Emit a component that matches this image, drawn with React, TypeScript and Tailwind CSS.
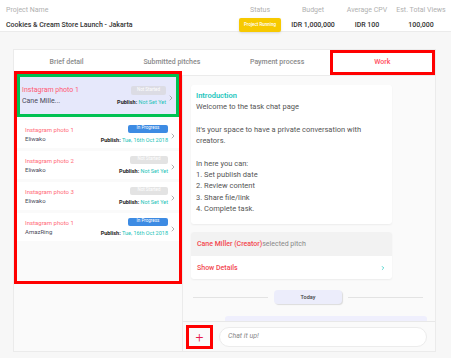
import { ChevronRight } from 'lucide-react';

const items = [
  { title: 'Instagram photo 1', who: 'Eliwako', status: 'progress', date: 'Tue, 16th Oct 2018' },
  { title: 'Instagram photo 2', who: 'Eliwako', status: 'none', date: 'Not Set Yet' },
  { title: 'Instagram photo 3', who: 'Eliwako', status: 'none', date: 'Not Set Yet' },
  { title: 'Instagram photo 1', who: 'AmazRing', status: 'progress', date: 'Tue, 16th Oct 2018' },
];

function Badge({ status }: { status: string }) {
  if (status === 'progress') {
    return (
      <span className="flex h-[8px] w-[40px] items-center justify-center rounded-[2px] bg-[#3d8be3] text-[4.5px] text-white">
        In Progress
      </span>
    );
  }
  return (
    <span className="flex h-[8px] w-[38px] items-center justify-center rounded-[2px] bg-[#e3e3e3] text-[4.5px] text-white">
      Not Started
    </span>
  );
}

function HeaderCol({ label, children, w }: { label: string; children: React.ReactNode; w: string }) {
  return (
    <div className={`flex flex-col items-center ${w}`}>
      <span className="text-[7px] leading-[10px] text-[#b0b0b0]">{label}</span>
      <div className="mt-[3px] flex h-[14px] items-center text-[7px] font-medium text-[#333]">{children}</div>
    </div>
  );
}

export default function App() {
  return (
    <div
      className="flex h-[358px] w-[451px] flex-col overflow-hidden bg-[#f7f7f7]"
      style={{ fontFamily: 'Roboto, "Noto Sans", sans-serif' }}
    >
      {/* header */}
      <div className="flex h-[32px] shrink-0 items-start border-b border-[#ebebeb] bg-white pl-[6px] pt-[5px] pr-[2px]">
        <div className="flex flex-col">
          <span className="text-[7px] leading-[10px] text-[#b0b0b0]">Project Name</span>
          <span className="mt-[3px] text-[7px] leading-[14px] font-medium text-[#333]">
            Cookies &amp; Cream Store Launch - Jakarta
          </span>
        </div>
        <div className="ml-auto flex">
          <HeaderCol label="Status" w="w-[50px]">
            <span className="flex h-[14px] w-[42px] items-center justify-center rounded-[2px] bg-[#f7c900] text-[4.5px] text-white shadow-sm">
              Project Running
            </span>
          </HeaderCol>
          <HeaderCol label="Budget" w="w-[56px]">IDR 1,000,000</HeaderCol>
          <HeaderCol label="Average CPV" w="w-[52px]">IDR 100</HeaderCol>
          <HeaderCol label="Est. Total Views" w="w-[56px]">100,000</HeaderCol>
        </div>
      </div>

      {/* main card */}
      <div className="ml-[13px] mt-[17px] flex h-[303px] w-[423px] shrink-0 flex-col border border-[#ebebeb] bg-white">
        <div className="grid h-[26px] shrink-0 grid-cols-4 border-b border-[#ebebeb] text-[7px] font-medium text-[#8a8a8a]">
          <div className="flex items-center justify-center">Brief detail</div>
          <div className="flex items-center justify-center">Submitted pitches</div>
          <div className="flex items-center justify-center">Payment process</div>
          <div className="flex items-center justify-center border-[3px] border-[#ff0000] text-[#ff4d5e]">Work</div>
        </div>

        <div className="flex min-h-0 flex-1">
          {/* left list */}
          <div className="flex w-[169px] flex-col border-r border-[#ebebeb] bg-[#fafafa]">
            <div className="-mt-[5px] flex h-[213px] shrink-0 flex-col gap-[3px] border-[3px] border-[#ff0000]">
              <div className="border-[3px] border-[#00c152]">
                <div className="flex h-[37px] items-center bg-[#e6e8fb] pl-[2px] pr-[1px]">
                  <div className="flex flex-1 flex-col">
                    <span className="text-[7px] leading-[11px] text-[#ff5a72]">Instagram photo 1</span>
                    <span className="text-[7px] leading-[11px] text-[#4a4a5a]">Cane Mille...</span>
                  </div>
                  <div className="flex flex-col items-end">
                    <span className="flex h-[9px] w-[35px] items-center justify-center rounded-[2px] bg-[#dcdce4] text-[4.5px] text-white">
                      Not Started
                    </span>
                    <span className="mt-[3px] text-[5.5px] leading-[8px]">
                      <b className="text-[#222]">Publish:</b> <span className="text-[#22c3b8]">Not Set Yet</span>
                    </span>
                  </div>
                  <ChevronRight className="ml-[1px] mt-[4px] h-[8px] w-[8px] text-[#888]" strokeWidth={2} />
                </div>
              </div>
              {items.map((it, i) => (
                <div key={i} className="flex h-[28px] shrink-0 items-center bg-white pl-[8px] pr-[2px]">
                  <div className="flex flex-1 flex-col">
                    <span className="text-[6px] leading-[9px] text-[#ff6b78]">{it.title}</span>
                    <span className="text-[6px] leading-[9px] text-[#4a4a5a]">{it.who}</span>
                  </div>
                  <div className="flex flex-col items-end">
                    <Badge status={it.status} />
                    <span className="mt-[3px] text-[5.5px] leading-[8px]">
                      <b className="text-[#222]">Publish:</b> <span className="text-[#22c3b8]">{it.date}</span>
                    </span>
                  </div>
                  <ChevronRight className="ml-[1px] mt-[4px] h-[8px] w-[8px] text-[#888]" strokeWidth={2} />
                </div>
              ))}
            </div>
          </div>

          {/* chat */}
          <div className="flex min-w-0 flex-1 flex-col bg-[#fafafa]">
            <div className="flex min-h-0 flex-1 flex-col overflow-hidden pl-[8px] pr-[8px] pt-[9px]">
              <div className="w-[201px] shrink-0 rounded-[3px] bg-white px-[5px] pt-[5px] pb-[10px] text-[7.5px] leading-[11.3px] text-[#555] shadow-[0_1px_2px_rgba(0,0,0,0.06)]">
                <div className="font-semibold text-[#1ec6bd]">Introduction</div>
                <div>Welcome to the task chat page</div>
                <div className="h-[11.3px]" />
                <div>It's your space to have a private conversation with creators.</div>
                <div className="h-[11.3px]" />
                <div>In here you can:</div>
                <div>1. Set publish date</div>
                <div>2. Review content</div>
                <div>3. Share file/link</div>
                <div>4. Complete task.</div>
              </div>

              <div className="mt-[8px] w-[201px] shrink-0 overflow-hidden rounded-[3px] bg-white shadow-[0_1px_2px_rgba(0,0,0,0.06)]">
                <div className="flex h-[24px] items-center bg-[#f2f2f2] px-[6px] text-[7px]">
                  <span className="font-medium text-[#f2474f]">Cane Miller (Creator)</span>
                  <span className="text-[#888]">selected pitch</span>
                </div>
                <div className="flex h-[23px] items-center justify-between px-[6px] text-[7px]">
                  <span className="font-medium text-[#f2474f]">Show Details</span>
                  <ChevronRight className="h-[6px] w-[6px] text-[#1ec6bd]" strokeWidth={3} />
                </div>
              </div>

              <div className="mt-[11px] flex shrink-0 items-center gap-[6px] pl-[2px] pr-[4px]">
                <div className="h-px flex-1 bg-[#e3e3e3]" />
                <span className="flex h-[14px] w-[68px] items-center justify-center rounded-[4px] bg-[#ecedfb] text-[5.5px] font-medium text-[#444] shadow-[1px_1px_1px_rgba(0,0,0,0.12)]">
                  Today
                </span>
                <div className="h-px flex-1 bg-[#e3e3e3]" />
              </div>

              <div className="ml-auto mt-[12px] h-[20px] w-[202px] shrink-0 rounded-[3px] bg-[#efeffd]" />
            </div>

            <div className="flex h-[30px] shrink-0 items-center gap-[6px] border-t border-[#e8e8e8] bg-[#fafafa] pl-[3px] pr-[8px]">
              <div className="flex h-[24px] w-[27px] items-center justify-center border-[3px] border-[#ff0000] text-[14px] font-light leading-none text-[#e8194c]">
                +
              </div>
              <div className="flex h-[20px] flex-1 items-center rounded-full border border-[#ececec] bg-white px-[8px] text-[7px] italic text-[#888]">
                Chat it up!
              </div>
            </div>
          </div>
        </div>
      </div>
    </div>
  );
}
